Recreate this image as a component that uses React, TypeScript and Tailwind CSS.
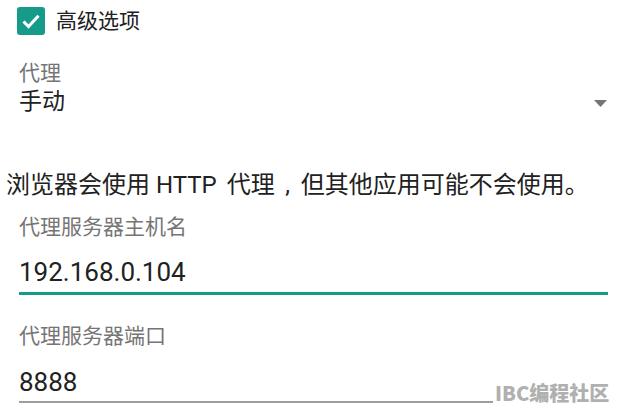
import React from "react";

const font = "font-['Roboto','Noto_Sans_CJK_SC',sans-serif]";

function Checkbox() {
  return (
    <svg width="28" height="28" viewBox="0 0 28 28" className="shrink-0">
      <rect x="0" y="0" width="28" height="28" rx="3" fill="#169b8b" />
      <path d="M6.5 14.5 L11.5 19.5 L21.5 8.8" fill="none" stroke="#fff" strokeWidth="3" />
    </svg>
  );
}

export default function App() {
  return (
    <div className={`relative w-[620px] h-[419px] overflow-hidden bg-white pt-[7px] text-[#212121] ${font}`}>
      <div className="flex h-[28px] items-center gap-[11px] pl-[17px]">
        <Checkbox />
        <span className="text-[21px] leading-[28px]">高级选项</span>
      </div>

      <div className="mt-[26px] pl-[19px] text-[21px] leading-[24px] text-[#757575]">代理</div>
      <div className="mt-[3px] flex items-center justify-between pl-[19px] pr-[13px]">
        <span className="text-[23px] leading-[28px]">手动</span>
        <svg width="13" height="7" viewBox="0 0 13 7" className="mt-[2px]">
          <path d="M0 0 H13 L6.5 7 Z" fill="#757575" />
        </svg>
      </div>

      <div className="mt-[55px] whitespace-nowrap pl-[6px] text-[24px] leading-[28px]">
        浏览器会使用 HTTP <span className="ml-[4px]">代理</span>
        <span className="inline-block w-[26px] text-center">,</span>但其他应用可能不会使用。
      </div>

      <div className="mt-[16px] pl-[19px] text-[21px] leading-[24px] text-[#757575]">代理服务器主机名</div>
      <div className="mt-[18px] ml-[19px] mr-[12px] border-b-[3px] border-[#169b8b] pb-[5px] text-[26px] leading-[30px]">
        192.168.0.104
      </div>

      <div className="mt-[29px] pl-[19px] text-[21px] leading-[24px] text-[#757575]">代理服务器端口</div>
      <div className="mt-[19px] ml-[19px] mr-[10px] border-b-2 border-[#9e9e9e] pb-[4px] text-[26px] leading-[30px]">
        8888
      </div>

      <div className="absolute left-[493px] top-[381px] bg-white pl-[2px] pr-[10px] font-['Noto_Sans_CJK_SC',sans-serif] text-[20px] font-black leading-[24px] text-[#b0b0b0]">
        IBC编程社区
      </div>
    </div>
  );
}
